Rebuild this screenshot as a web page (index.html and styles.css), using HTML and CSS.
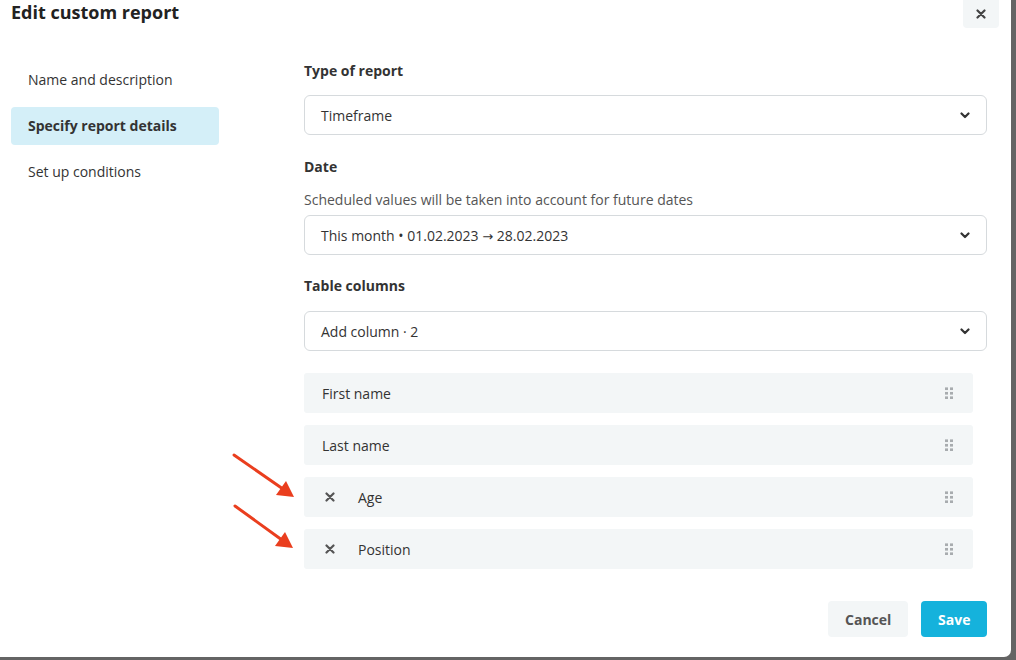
FILE: index.html
```html
<!DOCTYPE html>
<html lang="en">
<head>
  <meta charset="UTF-8">
  <title>Edit custom report</title>
  <meta name="viewport" content="width=device-width, initial-scale=1.0">
  <link rel="stylesheet" href="styles.css">
</head>
<body>

  <div class="modal">
    <!-- Header -->
    <div class="modal-head">
      <h2>Edit custom report</h2>
      <button class="close" type="button" aria-label="Close">
        <svg width="10" height="10" viewBox="0 0 10 10"><path d="M1.5 1.5l7 7M8.5 1.5l-7 7" stroke="#444" stroke-width="2.2" stroke-linecap="round"/></svg>
      </button>
    </div>

    <div class="modal-body">
      <!-- Steps -->
      <ul class="steps">
        <li>Name and description</li>
        <li class="active">Specify report details</li>
        <li>Set up conditions</li>
      </ul>

      <!-- Form -->
      <div class="form">
        <label class="label">Type of report</label>
        <div class="select">
          <span>Timeframe</span>
          <svg class="chev" width="10" height="7" viewBox="0 0 10 7"><path d="M1.5 1.5l3.5 3.5 3.5-3.5" fill="none" stroke="#333" stroke-width="2.2" stroke-linecap="round" stroke-linejoin="round"/></svg>
        </div>

        <label class="label">Date</label>
        <p class="hint">Scheduled values will be taken into account for future dates</p>
        <div class="select">
          <span>This month • 01.02.2023 <span class="arrow">→</span> 28.02.2023</span>
          <svg class="chev" width="10" height="7" viewBox="0 0 10 7"><path d="M1.5 1.5l3.5 3.5 3.5-3.5" fill="none" stroke="#333" stroke-width="2.2" stroke-linecap="round" stroke-linejoin="round"/></svg>
        </div>

        <label class="label">Table columns</label>
        <div class="select">
          <span>Add column · 2</span>
          <svg class="chev" width="10" height="7" viewBox="0 0 10 7"><path d="M1.5 1.5l3.5 3.5 3.5-3.5" fill="none" stroke="#333" stroke-width="2.2" stroke-linecap="round" stroke-linejoin="round"/></svg>
        </div>

        <ul class="columns">
          <li><span class="name">First name</span><i class="grip"></i></li>
          <li><span class="name">Last name</span><i class="grip"></i></li>
          <li>
            <svg class="remove" width="10" height="10" viewBox="0 0 10 10"><path d="M1.5 1.5l7 7M8.5 1.5l-7 7" stroke="#555" stroke-width="2.2" stroke-linecap="round"/></svg>
            <span class="name">Age</span><i class="grip"></i>
          </li>
          <li>
            <svg class="remove" width="10" height="10" viewBox="0 0 10 10"><path d="M1.5 1.5l7 7M8.5 1.5l-7 7" stroke="#555" stroke-width="2.2" stroke-linecap="round"/></svg>
            <span class="name">Position</span><i class="grip"></i>
          </li>
        </ul>

        <div class="actions">
          <button class="btn btn-cancel" type="button">Cancel</button>
          <button class="btn btn-save" type="button">Save</button>
        </div>
      </div>
    </div>

    <!-- Callout arrows -->
    <svg class="arrows" width="1016" height="660" viewBox="0 0 1016 660">
      <g stroke="#ea3e1e" stroke-width="3" stroke-linecap="round">
        <line x1="234" y1="455" x2="283" y2="489"/>
        <line x1="235" y1="506" x2="282" y2="540"/>
      </g>
      <g fill="#ea3e1e">
        <polygon points="294,497 276,495 286,481"/>
        <polygon points="293,548 275,546 285,532"/>
      </g>
    </svg>
  </div>

</body>
</html>
```

FILE: styles.css
```css
* {
  box-sizing: border-box;
  font-family: "Open Sans", Arial, sans-serif;
}
body {
  margin: 0;
  background: #646464;
  color: #333;
  height: 660px;
  overflow: hidden;
}
.modal {
  position: relative;
  width: 1011px;
  height: 657px;
  background: #fff;
  border-radius: 0 0 7px 0;
  padding: 0 24px 20px 11px;
}
.modal-head {
  display: flex;
  justify-content: space-between;
  align-items: flex-start;
  height: 61px;
  margin-right: -12px;
}
.modal-head h2 {
  margin: 0;
  font-size: 18px;
  line-height: 24px;
  font-weight: 700;
  color: #222;
}
.close {
  width: 36px;
  height: 28px;
  border: 0;
  border-radius: 0 0 4px 4px;
  background: #f3f6f7;
  display: flex;
  align-items: center;
  justify-content: center;
  padding: 0;
}
.modal-body {
  display: grid;
  grid-template-columns: 208px 1fr;
  column-gap: 85px;
}
.steps {
  list-style: none;
  margin: 0;
  padding: 0;
  display: flex;
  flex-direction: column;
  gap: 8px;
}
.steps li {
  height: 38px;
  line-height: 38px;
  padding-left: 17px;
  font-size: 14px;
  border-radius: 4px;
  color: #333;
}
.steps li.active {
  background: #d4eff8;
  font-weight: 700;
}
.form {
  display: flex;
  flex-direction: column;
}
.label {
  font-size: 14px;
  line-height: 20px;
  font-weight: 700;
  color: #333;
  margin-bottom: 14px;
}
.hint {
  margin: 0 0 5px;
  font-size: 14px;
  line-height: 20px;
  color: #555;
}
.select {
  height: 40px;
  border: 1px solid #d6dadd;
  border-radius: 6px;
  display: flex;
  align-items: center;
  justify-content: space-between;
  padding: 0 16px;
  font-size: 14px;
  color: #333;
  margin-bottom: 22px;
}
.select .arrow {
  font-family: "DejaVu Sans", sans-serif;
  font-size: 13px;
}
.form > .label:nth-of-type(2) {
  margin-bottom: 13px;
}
.form > .label:nth-of-type(3) {
  margin-top: -1px;
  margin-bottom: 15px;
}
.columns {
  list-style: none;
  margin: 0 14px 0 0;
  padding: 0;
  display: flex;
  flex-direction: column;
  gap: 12px;
}
.columns li {
  height: 40px;
  background: #f3f6f7;
  border-radius: 3px;
  display: flex;
  align-items: center;
  padding: 0 20px 0 18px;
  font-size: 14px;
  color: #333;
}
.columns .name {
  flex: 1;
}
.columns .remove {
  margin: 0 23px 0 3px;
}
.grip {
  width: 8px;
  height: 12px;
  background-image: radial-gradient(circle, #a8acaf 1.6px, transparent 1.7px);
  background-size: 5px 4.5px;
  background-position: -1px -0.5px;
}
.actions {
  display: flex;
  justify-content: flex-end;
  gap: 13px;
  margin-top: 32px;
}
.btn {
  height: 36px;
  border: 0;
  border-radius: 4px;
  font-size: 14px;
  font-weight: 700;
  padding: 0 17px;
}
.btn-cancel {
  background: #f3f6f7;
  color: #555;
  width: 80px;
}
.btn-save {
  background: #15b2dc;
  color: #fff;
  width: 66px;
}
.arrows {
  position: absolute;
  left: 0;
  top: 0;
  pointer-events: none;
}
```
